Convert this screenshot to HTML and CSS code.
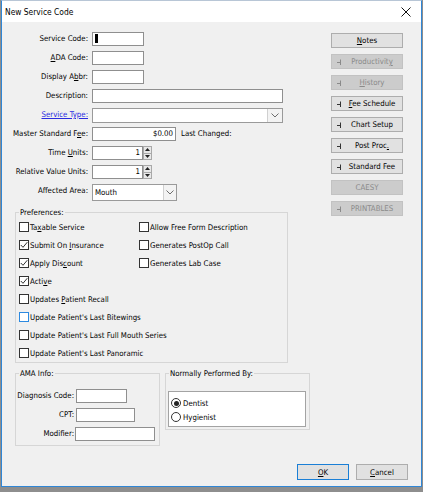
FILE: index.html
```html
<!DOCTYPE html>
<html>
<head>
<meta charset="utf-8">
<title>New Service Code</title>
<link rel="stylesheet" href="styles.css">
</head>
<body>
<div class="window">
  <div class="titlebar">
    <span class="title">New Service Code</span>
    <svg class="close" width="10" height="10" viewBox="0 0 10 10"><path d="M0.5 0.5 L9.5 9.5 M9.5 0.5 L0.5 9.5" stroke="#111" stroke-width="1" fill="none"/></svg>
  </div>
  <div class="content">
    <div class="main">
      <div class="left">
        <div class="form">
          <span class="lbl">Service Code:</span>
          <div class="field"><div class="input w52"><span class="caret"></span></div></div>

          <span class="lbl"><u>A</u>DA Code:</span>
          <div class="field"><div class="input w52"></div></div>

          <span class="lbl">Display A<u>b</u>br:</span>
          <div class="field"><div class="input w52"></div></div>

          <span class="lbl">Description:</span>
          <div class="field"><div class="input w191"></div></div>

          <span class="lbl link">Service Type:</span>
          <div class="field">
            <div class="select w191 h15">
              <span class="val"></span>
              <span class="arrow wide"><svg width="8" height="5" viewBox="0 0 8 5"><path d="M0.5 0.5 L4 4 L7.5 0.5" stroke="#6d6d6d" fill="none"/></svg></span>
            </div>
          </div>

          <span class="lbl">Master Standard F<u>e</u>e:</span>
          <div class="field">
            <div class="input w84 right">$0.00</div>
            <span class="after">Last Changed:</span>
          </div>

          <span class="lbl">Time <u>U</u>nits:</span>
          <div class="field">
            <div class="input w51 right">1</div>
            <div class="spin">
              <span><svg width="5" height="3" viewBox="0 0 5 3"><path d="M0 3 L2.5 0 L5 3 Z" fill="#222"/></svg></span>
              <span><svg width="5" height="3" viewBox="0 0 5 3"><path d="M0 0 L2.5 3 L5 0 Z" fill="#222"/></svg></span>
            </div>
          </div>

          <span class="lbl">Relative Value Units:</span>
          <div class="field">
            <div class="input w51 right">1</div>
            <div class="spin">
              <span><svg width="5" height="3" viewBox="0 0 5 3"><path d="M0 3 L2.5 0 L5 3 Z" fill="#222"/></svg></span>
              <span><svg width="5" height="3" viewBox="0 0 5 3"><path d="M0 0 L2.5 3 L5 0 Z" fill="#222"/></svg></span>
            </div>
          </div>

          <span class="lbl">Affected Area:</span>
          <div class="field">
            <div class="select w85 h17">
              <span class="val">Mouth</span>
              <span class="arrow"><svg width="8" height="5" viewBox="0 0 8 5"><path d="M0.5 0.5 L4 4 L7.5 0.5" stroke="#6d6d6d" fill="none"/></svg></span>
            </div>
          </div>
        </div>

        <div class="group prefs">
          <div class="gtitle">Preferences:</div>
          <div class="checks">
            <div class="chk"><span class="box"></span><span>Ta<u>x</u>able Service</span></div>
            <div class="chk"><span class="box"></span><span>Allow Free Form Description</span></div>
            <div class="chk"><span class="box"><svg width="8" height="8" viewBox="0 0 8 8"><path d="M0.8 4 L3 6.3 L7.3 1.2" stroke="#333" stroke-width="1" fill="none"/></svg></span><span>Submit On <u>I</u>nsurance</span></div>
            <div class="chk"><span class="box"></span><span>Generates PostOp Call</span></div>
            <div class="chk"><span class="box"><svg width="8" height="8" viewBox="0 0 8 8"><path d="M0.8 4 L3 6.3 L7.3 1.2" stroke="#333" stroke-width="1" fill="none"/></svg></span><span>Apply Dis<u>c</u>ount</span></div>
            <div class="chk"><span class="box"></span><span>Generates Lab Case</span></div>
            <div class="chk full"><span class="box"><svg width="8" height="8" viewBox="0 0 8 8"><path d="M0.8 4 L3 6.3 L7.3 1.2" stroke="#333" stroke-width="1" fill="none"/></svg></span><span>Acti<u>v</u>e</span></div>
            <div class="chk full"><span class="box"></span><span>Updates <u>P</u>atient Recall</span></div>
            <div class="chk full"><span class="box focus"></span><span>Update Patient's Last Bitewings</span></div>
            <div class="chk full"><span class="box"></span><span>Update Patient's Last Full Mouth Series</span></div>
            <div class="chk full"><span class="box"></span><span>Update Patient's Last Panoramic</span></div>
          </div>
        </div>

        <div class="lower">
          <div class="group ama">
            <div class="gtitle">AMA Info:</div>
            <div class="amaform">
              <span class="lbl">Diagnosis Code:</span>
              <div class="field"><div class="input w51"></div></div>
              <span class="lbl">CPT:</span>
              <div class="field"><div class="input w59"></div></div>
              <span class="lbl">Modifier:</span>
              <div class="field"><div class="input w80 shift"></div></div>
            </div>
          </div>
          <div class="group perf">
            <div class="gtitle">Normally Performed By:</div>
            <div class="radios">
              <div class="rad"><span class="circle on"><span class="dot"></span></span><span>Dentist</span></div>
              <div class="rad"><span class="circle"></span><span>Hygienist</span></div>
            </div>
          </div>
        </div>
      </div>

      <div class="side">
        <div class="btn plain"><span class="txt"><u>N</u>otes</span></div>
        <div class="btn icon disabled"><svg width="5" height="6" viewBox="0 0 5 6"><path d="M0 3.5 H3 M3.5 0.5 V6" stroke="#8a8a8a" fill="none"/></svg><span class="txt">Productivit<u>y</u></span></div>
        <div class="btn icon disabled"><svg width="5" height="6" viewBox="0 0 5 6"><path d="M0 3.5 H3 M3.5 0.5 V6" stroke="#8a8a8a" fill="none"/></svg><span class="txt"><u>H</u>istory</span></div>
        <div class="btn icon"><svg width="5" height="6" viewBox="0 0 5 6"><path d="M0 3.5 H3 M3.5 0.5 V6" stroke="#333" fill="none"/></svg><span class="txt"><u>F</u>ee Schedule</span></div>
        <div class="btn icon"><svg width="5" height="6" viewBox="0 0 5 6"><path d="M0 3.5 H3 M3.5 0.5 V6" stroke="#333" fill="none"/></svg><span class="txt">Chart Setup</span></div>
        <div class="btn icon"><svg width="5" height="6" viewBox="0 0 5 6"><path d="M0 3.5 H3 M3.5 0.5 V6" stroke="#333" fill="none"/></svg><span class="txt">Post Proc<u>.</u></span></div>
        <div class="btn icon"><svg width="5" height="6" viewBox="0 0 5 6"><path d="M0 3.5 H3 M3.5 0.5 V6" stroke="#333" fill="none"/></svg><span class="txt">Standard Fee</span></div>
        <div class="btn plain disabled"><span class="txt">CAESY</span></div>
        <div class="btn icon disabled"><svg width="5" height="6" viewBox="0 0 5 6"><path d="M0 3.5 H3 M3.5 0.5 V6" stroke="#8a8a8a" fill="none"/></svg><span class="txt">PRINTABLES</span></div>
      </div>
    </div>

    <div class="actions">
      <div class="btn plain default"><span class="txt"><u>O</u>K</span></div>
      <div class="btn plain"><span class="txt"><u>C</u>ancel</span></div>
    </div>
  </div>
</div>
</body>
</html>
```

FILE: styles.css
```css
html, body {
  margin: 0;
  padding: 0;
  background: #8e8e8e;
}
body {
  font-family: "DejaVu Sans Condensed", "Liberation Sans", Arial, sans-serif;
  font-size: 7.8px;
  color: #000;
}
u {
  text-decoration: underline;
  text-decoration-thickness: 1px;
  text-underline-offset: 1px;
}
.window {
  box-sizing: border-box;
  margin-left: 1px;
  width: 421px;
  height: 487px;
  border: 1px solid #2f86d6;
  border-top-color: #b8c6d6;
  background: #f0f0f0;
  display: flex;
  flex-direction: column;
}
.titlebar {
  height: 21px;
  flex: none;
  background: #fff;
  display: flex;
  align-items: center;
  justify-content: space-between;
  padding-left: 3px;
}
.title {
  font-size: 8.4px;
}
.close {
  margin-right: 10px;
}
.content {
  padding: 10px 0 0 13px;
}
.main {
  display: flex;
  align-items: flex-start;
}
.left {
  width: 296px;
}
.form {
  display: grid;
  grid-template-columns: 73px 1fr;
  grid-auto-rows: 19px;
  column-gap: 4px;
  align-items: start;
}
.lbl {
  justify-self: end;
  white-space: nowrap;
  line-height: 14px;
}
.lbl.link {
  color: #2a2ae0;
  text-decoration: underline;
  text-decoration-thickness: 1px;
}
.field {
  display: flex;
  align-items: flex-start;
}
.input {
  box-sizing: border-box;
  height: 14px;
  border: 1px solid #8f8f8f;
  background: #fff;
  line-height: 12px;
  padding: 0 2px;
  white-space: nowrap;
}
.input.right { text-align: right; }
.w51 { width: 51px; }
.w52 { width: 52px; }
.w59 { width: 59px; }
.w80 { width: 80px; }
.w84 { width: 84px; }
.w85 { width: 85px; }
.w191 { width: 191px; }
.shift { margin-left: -1px; }
.caret {
  display: inline-block;
  width: 3px;
  height: 9px;
  background: #000;
  vertical-align: top;
  margin-top: 1px;
}
.after {
  margin-left: 5px;
  line-height: 14px;
  white-space: nowrap;
}
.select {
  box-sizing: border-box;
  border: 1px solid #9a9a9a;
  background: #fff;
  display: flex;
}
.h15 { height: 15px; }
.h17 { height: 17px; }
.select .val {
  flex: 1;
  padding-left: 2px;
  line-height: 15px;
}
.select .arrow {
  width: 12px;
  border-left: 1px solid #d0d0d0;
  background: #f3f3f3;
  display: flex;
  align-items: center;
  justify-content: center;
}
.select .arrow.wide { width: 14px; }
.spin {
  width: 9px;
  height: 14px;
  display: flex;
  flex-direction: column;
}
.spin span {
  flex: 1;
  box-sizing: border-box;
  border: 1px solid #a9a9a9;
  background: #e8e8e8;
  display: flex;
  align-items: center;
  justify-content: center;
}
.spin span + span { border-top: none; }

.group {
  box-sizing: border-box;
  border: 1px solid #d6d6d6;
}
.gtitle {
  width: fit-content;
  height: 11px;
  line-height: 11px;
  margin: -6px 0 0 3px;
  padding: 0 1px;
  background: #f0f0f0;
  white-space: nowrap;
}
.prefs {
  margin-top: 9px;
  width: 273px;
}
.checks {
  display: grid;
  grid-template-columns: 120px 1fr;
  grid-auto-rows: 18px;
  padding-left: 3px;
}
.chk {
  display: flex;
  align-items: center;
  white-space: nowrap;
}
.chk.full { grid-column: 1 / span 2; }
.box {
  box-sizing: border-box;
  width: 10px;
  height: 10px;
  border: 1px solid #333;
  background: #fff;
  margin-right: 1px;
  display: flex;
  align-items: center;
  justify-content: center;
  flex: none;
}
.box.focus { border-color: #2d8ae0; }

.lower {
  display: flex;
  align-items: flex-start;
  gap: 5px;
  margin-top: 10px;
}
.ama {
  width: 145px;
  height: 73px;
}
.amaform {
  display: grid;
  grid-template-columns: 57px 1fr;
  grid-auto-rows: 19px;
  column-gap: 2px;
  padding: 10px 0 0 1px;
  align-items: start;
}
.perf {
  width: 145px;
  height: 57px;
}
.radios {
  margin: 12px 3px 0 2px;
  box-sizing: border-box;
  height: 36px;
  border: 1px solid #a3a3a3;
  background: #fff;
  padding: 4px 0 0 2px;
}
.rad {
  height: 14px;
  display: flex;
  align-items: center;
  gap: 2px;
}
.circle {
  box-sizing: border-box;
  width: 10px;
  height: 10px;
  border-radius: 50%;
  border: 1px solid #333;
  background: #fff;
  display: flex;
  align-items: center;
  justify-content: center;
}
.dot {
  width: 5px;
  height: 5px;
  border-radius: 50%;
  background: #222;
}

.side {
  margin-left: 20px;
  padding-top: 1px;
  width: 72px;
  display: flex;
  flex-direction: column;
  gap: 6px;
}
.btn {
  box-sizing: border-box;
  height: 15px;
  width: 72px;
  border: 1px solid #adadad;
  background: #e1e1e1;
  display: flex;
  align-items: center;
  white-space: nowrap;
}
.btn .txt {
  flex: 1;
  text-align: center;
  line-height: 13px;
}
.btn.icon { padding-left: 5px; }
.btn.disabled {
  background: #cccccc;
  border-color: #c2c2c2;
  color: #8a8a8a;
}
.actions {
  margin-top: 18px;
  padding-right: 13px;
  display: flex;
  justify-content: flex-end;
  gap: 7px;
}
.actions .btn {
  width: 52px;
  height: 16px;
}
.btn.default { border-color: #1a7fd6; }
```
